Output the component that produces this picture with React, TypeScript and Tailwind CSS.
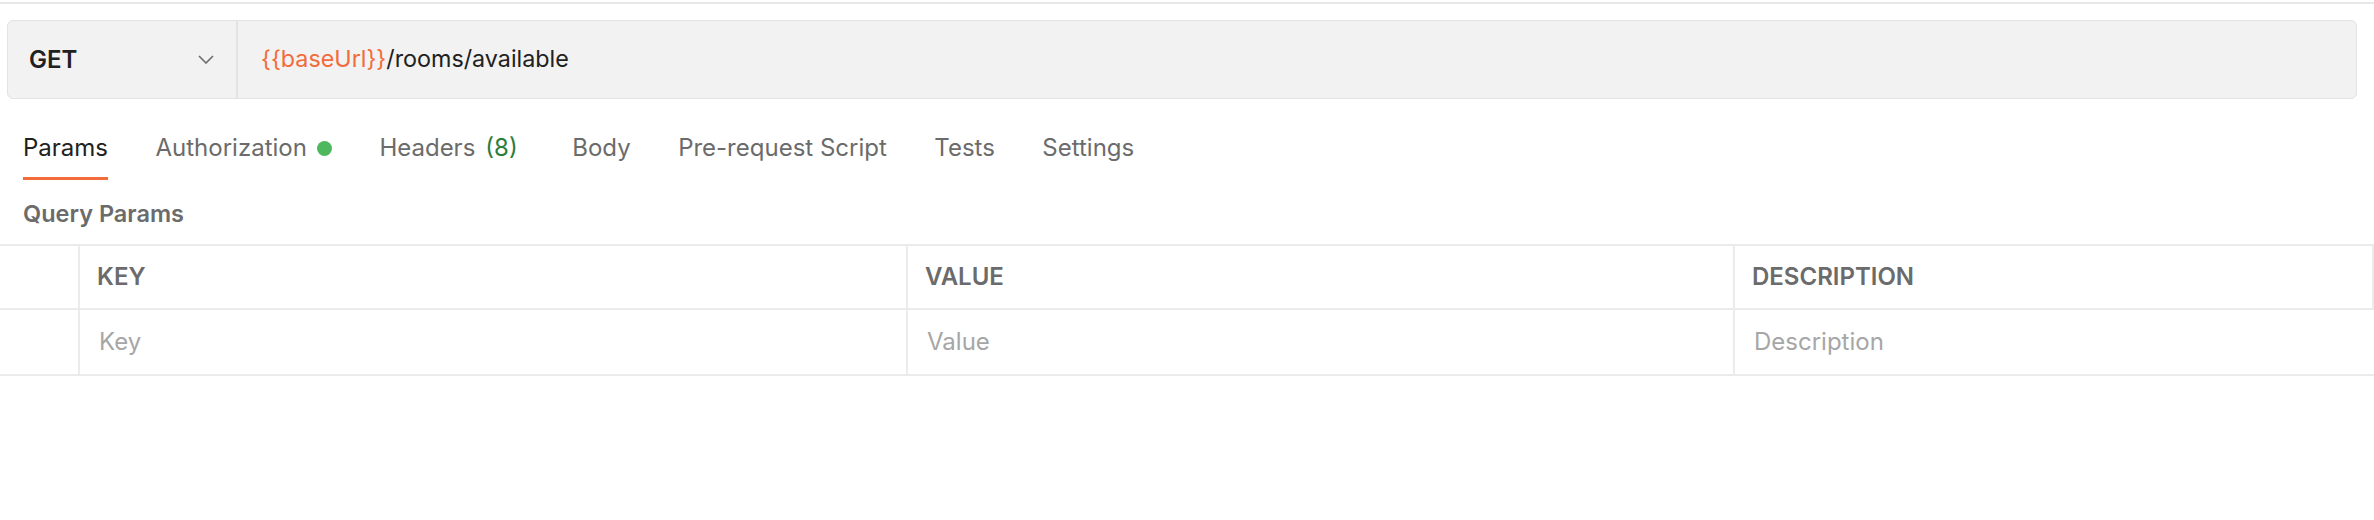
import React from 'react'

const tabs = [
  { label: 'Params', active: true },
  { label: 'Authorization', dot: true },
  { label: 'Headers', count: 8 },
  { label: 'Body', extra: true },
  { label: 'Pre-request Script' },
  { label: 'Tests' },
  { label: 'Settings' },
]

const App = () => {
  return (
    <div className="w-full min-h-[520px] bg-white font-['Inter','Liberation_Sans',sans-serif]">
      <div className="pt-[2px]">
        <div className="h-[2px] bg-[#e8e8e8]" />
      </div>

      {/* request line */}
      <div className="mt-[16px] ml-[7px] mr-[17px] h-[79px] flex rounded-[6px] border border-[#e3e3e3] bg-[#f2f2f2]">
        <div className="w-[230px] flex items-center justify-between pl-[21px] pr-[22px] border-r-2 border-[#e3e3e3]">
          <span className="text-[24px] font-semibold text-[#212121]">GET</span>
          <svg width="16" height="9" viewBox="0 0 16 9" fill="none">
            <polyline points="1,1 8,8 15,1" stroke="#6b6b6b" strokeWidth="1.6" />
          </svg>
        </div>
        <div className="flex items-center pl-[23px] text-[23.3px]">
          <span className="text-[#f26b3a]">{'{{baseUrl}}'}</span>
          <span className="text-[#212121]">/rooms/available</span>
        </div>
      </div>

      {/* tabs */}
      <div className="mt-[34px] pl-[23px] flex items-start gap-[47.5px]">
        {tabs.map((t) => (
          <div key={t.label} className={`flex flex-col ${t.extra ? 'ml-[7px]' : ''}`}>
            <div className="flex items-center h-[30px] text-[24px]">
              <span className={t.active ? 'text-[#212121]' : 'text-[#6b6b6b]'}>{t.label}</span>
              {t.dot && <span className="ml-[10px] w-[15px] h-[15px] rounded-full bg-[#4fb85e]" />}
              {t.count !== undefined && <span className="ml-[10px] text-[#2d7d3a]">({t.count})</span>}
            </div>
            <div className={`mt-[14px] h-[3px] ${t.active ? 'bg-[#f26b3a]' : ''}`} />
          </div>
        ))}
      </div>

      <div className="mt-[20px] pl-[23px] h-[28px] flex items-center text-[23.5px] font-semibold text-[#6b6b6b]">
        Query Params
      </div>

      {/* params table */}
      <div className="mt-[16px] border-t-2 border-b-2 border-[#ebebeb]">
        <div className="grid grid-cols-[78px_828px_827px_1fr] h-[64px] border-b-2 border-[#ebebeb]">
          <div />
          <div className="flex items-center pl-[17px] border-l-2 border-[#ebebeb] text-[24px] font-semibold text-[#6b6b6b]">KEY</div>
          <div className="flex items-center pl-[17px] border-l-2 border-[#ebebeb] text-[24px] font-semibold text-[#6b6b6b]">VALUE</div>
          <div className="flex items-center pl-[17px] border-l-2 border-r-2 border-[#ebebeb] text-[24px] font-semibold text-[#6b6b6b]">DESCRIPTION</div>
        </div>
        <div className="grid grid-cols-[78px_828px_827px_1fr] h-[64px]">
          <div />
          <div className="flex items-center pl-[19px] border-l-2 border-[#ebebeb] text-[24px] text-[#a6a6a6]">Key</div>
          <div className="flex items-center pl-[19px] border-l-2 border-[#ebebeb] text-[24px] text-[#a6a6a6]">Value</div>
          <div className="flex items-center pl-[19px] border-l-2 border-[#ebebeb] text-[24px] text-[#a6a6a6]">Description</div>
        </div>
      </div>
    </div>
  )
}

export default App
